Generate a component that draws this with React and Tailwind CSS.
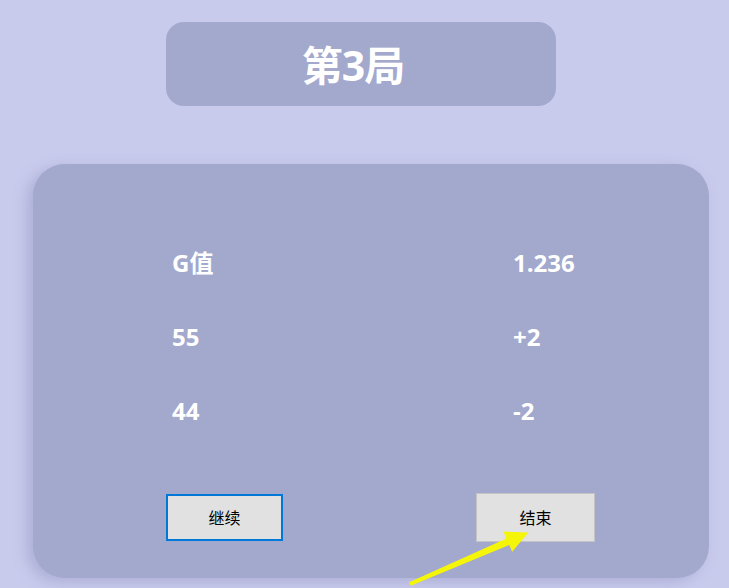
const rows = [
  ["G值", "1.236"],
  ["55", "+2"],
  ["44", "-2"],
];

export default function App() {
  return (
    <div
      className="relative w-[729px] h-[588px] overflow-hidden bg-[#c9cbed]"
      style={{ fontFamily: '"Open Sans", "Noto Sans CJK SC", sans-serif' }}
    >
      {/* title */}
      <div className="ml-[166px] mt-[22px] w-[390px] h-[84px] rounded-[18px] bg-[#a3a8cd] flex items-center justify-center pr-[16px] pt-[2px]">
        <span className="text-[41px] font-bold text-white leading-none tracking-[-1px]">第3局</span>
      </div>

      {/* score panel */}
      <div className="ml-[33px] mt-[58px] w-[676px] h-[414px] rounded-[32px] bg-[#a3a8cd] shadow-[-6px_4px_14px_rgba(120,124,170,0.35)] pt-[81px]">
        <div className="flex flex-col gap-[38px]">
          {rows.map(([a, b]) => (
            <div key={a} className="flex h-[36px] items-center text-[24px] font-bold text-white">
              <span className="ml-[139px] w-[341px]">{a}</span>
              <span>{b}</span>
            </div>
          ))}
        </div>
        <div className="flex mt-[65px]">
          <button className="ml-[133px] w-[117px] h-[47px] bg-[#e1e1e1] border-2 border-[#0078d7] text-[16px] text-black">
            继续
          </button>
          <button className="ml-[193px] -mt-px w-[119px] h-[49px] bg-[#e1e1e1] border border-[#c4c4c4] text-[16px] text-black">
            结束
          </button>
        </div>
      </div>

      {/* yellow annotation arrow */}
      <svg className="absolute left-0 top-0 pointer-events-none" width="729" height="588">
        <polygon
          points="409.2,582.2 506.4,538.5 503.4,531.6 528.5,532.5 512.2,551.8 509.2,544.9 410.8,585.8"
          fill="#f5f50a"
        />
      </svg>
    </div>
  );
}
